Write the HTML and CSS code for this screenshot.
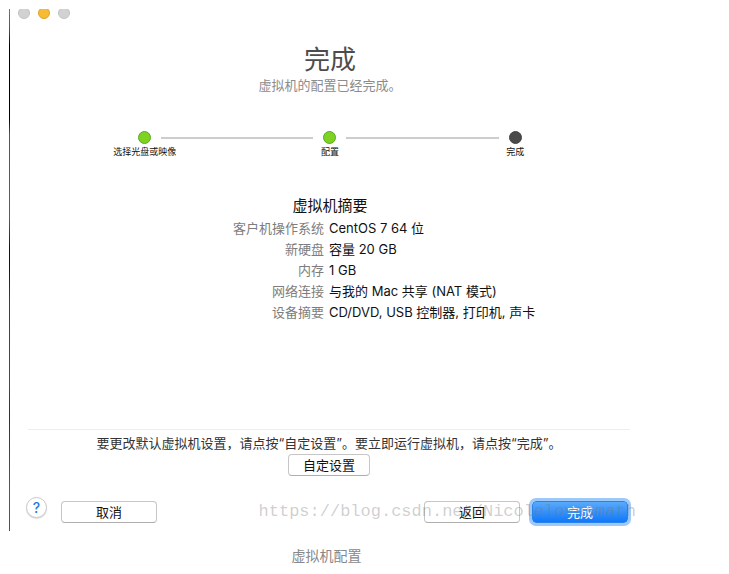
FILE: index.html
```html
<!DOCTYPE html>
<html lang="zh-CN">
<head>
<meta charset="utf-8">
<meta name="viewport" content="width=device-width, initial-scale=1">
<title>虚拟机配置</title>
<link rel="stylesheet" href="styles.css">
</head>
<body>
<figure class="figure">
  <main class="dialog">
    <div class="lights">
      <span class="light"></span>
      <span class="light light-amber"></span>
      <span class="light"></span>
    </div>
    <header class="heading">
      <h1 class="title">完成</h1>
      <p class="subtitle">虚拟机的配置已经完成。</p>
    </header>
    <ol class="steps">
      <li class="step step-done"><span class="dot"></span><span class="step-label">选择光盘或映像</span></li>
      <li class="step step-done"><span class="dot"></span><span class="step-label">配置</span></li>
      <li class="step"><span class="dot"></span><span class="step-label">完成</span></li>
    </ol>
    <section class="summary">
      <h2 class="summary-title">虚拟机摘要</h2>
      <dl class="facts">
        <dt>客户机操作系统</dt><dd>CentOS 7 64 位</dd>
        <dt>新硬盘</dt><dd>容量 20 GB</dd>
        <dt>内存</dt><dd>1 GB</dd>
        <dt>网络连接</dt><dd>与我的 Mac 共享 (NAT 模式)</dd>
        <dt>设备摘要</dt><dd>CD/DVD, USB 控制器, 打印机, 声卡</dd>
      </dl>
    </section>
    <section class="customize">
      <p class="hint">要更改默认虚拟机设置，请点按“自定设置”。要立即运行虚拟机，请点按“完成”。</p>
      <button class="button button-small" type="button">自定设置</button>
    </section>
    <footer class="actions">
      <button class="help" type="button">?</button>
      <button class="button" type="button">取消</button>
      <span class="spacer"></span>
      <button class="button" type="button">返回</button>
      <button class="button button-primary" type="button">完成</button>
      <span class="watermark">https://blog.csdn.net/Nicolelovesmath</span>
    </footer>
  </main>
  <figcaption class="caption">虚拟机配置</figcaption>
</figure>
</body>
</html>
```

FILE: styles.css
```css
* {
  box-sizing: border-box;
}

body {
  margin: 0;
  background: #fff;
  color: #111;
  font-family: Inter, "Noto Sans CJK SC", sans-serif;
  font-size: 13px;
  line-height: 21px;
}

h1, h2, p, ol, dl, dd {
  margin: 0;
  padding: 0;
  font-weight: 400;
}

.figure {
  margin: 9px 79px 0 9px;
}

.dialog {
  padding: 0 0 8px 1px;
  background: linear-gradient(#8a7a20 0%, #5a5420 4%, #000 7%, #000 21%, #2f6272 24%, #3a6a78 40%, #111 46%, #111 49%, #1d4668 56%, #24527a 72%, #1a3350 78%, #2a6490 92%, #2a5a80 100%) left top / 1px 100% no-repeat;
}

.lights {
  display: flex;
  gap: 8px;
  height: 10px;
  padding-left: 8px;
  overflow: hidden;
  align-items: flex-end;
}

.light {
  flex: none;
  width: 12px;
  height: 12px;
  border: 1px solid #c3c3c3;
  border-radius: 50%;
  background: #d2d2d2;
}

.light-amber {
  border-color: #dfa32c;
  background: #f8bc34;
}

.heading {
  padding-top: 24px;
  text-align: center;
}

.title {
  color: #4c4c4c;
  font-size: 26px;
  line-height: 34px;
}

.subtitle {
  color: #8c8c8c;
  line-height: 16px;
}

.steps {
  display: grid;
  grid-template-columns: repeat(3, 1fr);
  max-width: 556px;
  margin: 38px auto 0;
  list-style: none;
}

.step {
  display: grid;
  grid-template-columns: 1fr 13px 1fr;
  column-gap: 10px;
  align-items: center;
  text-align: center;
}

.step::before,
.step::after {
  height: 2px;
  background: #cdcdcd;
  content: "";
}

.step::before,
.step::after,
.dot {
  grid-row: 1;
}

.step:first-child::before,
.step:last-child::after {
  background: none;
}

.dot {
  height: 13px;
  border: 1px solid #444;
  border-radius: 50%;
  background: #4a4a4a;
}

.step-done .dot {
  border-color: #5da822;
  background: #7ed321;
}

.step-label {
  grid-column: 1 / -1;
  font-size: 9px;
  line-height: 16px;
}

.summary {
  padding-top: 34px;
}

.summary-title {
  font-size: 15px;
  line-height: 24px;
  text-align: center;
}

.facts {
  display: grid;
  grid-template-columns: 314fr 321fr;
  column-gap: 5px;
}

.facts dt {
  color: #7d7d7d;
  text-align: right;
}

.customize {
  margin: 106px 20px 0 18px;
  padding-top: 3px;
  border-top: 1px solid #ededed;
  text-align: center;
}

.hint {
  color: #333;
}

.button {
  width: 96px;
  height: 22px;
  padding: 0;
  border: 1px solid #c6c6c6;
  border-bottom-color: #aeaeae;
  border-radius: 4px;
  background: #fff;
  color: #111;
  font: inherit;
  line-height: 18px;
}

.button-small {
  display: block;
  width: 82px;
  margin: 0 auto;
}

.button-primary {
  border-color: #2a82e8;
  background: linear-gradient(#5aaafa, #0f78fb);
  box-shadow: 0 0 0 3px #9cc8fa;
  color: #fff;
}

.actions {
  position: relative;
  display: flex;
  gap: 12px;
  align-items: center;
  margin-top: 25px;
  padding: 0 22px 0 16px;
}

.help {
  align-self: flex-start;
  width: 21px;
  height: 21px;
  margin: -4px 2px 0 0;
  padding: 0;
  border: 1px solid #c9c9c9;
  border-radius: 50%;
  background: #fff;
  box-shadow: 0 1px 1px #ddd;
  color: #2378e8;
  font: 500 14px/18px Inter, sans-serif;
}

.spacer {
  flex: 1;
}

.watermark {
  position: absolute;
  right: 14px;
  color: rgb(120 120 120 / 36%);
  font: 17px/22px "Liberation Mono", monospace;
  pointer-events: none;
}

.caption {
  margin: 14px 6px 0 0;
  color: #888;
  font-size: 14px;
  text-align: center;
}
```
